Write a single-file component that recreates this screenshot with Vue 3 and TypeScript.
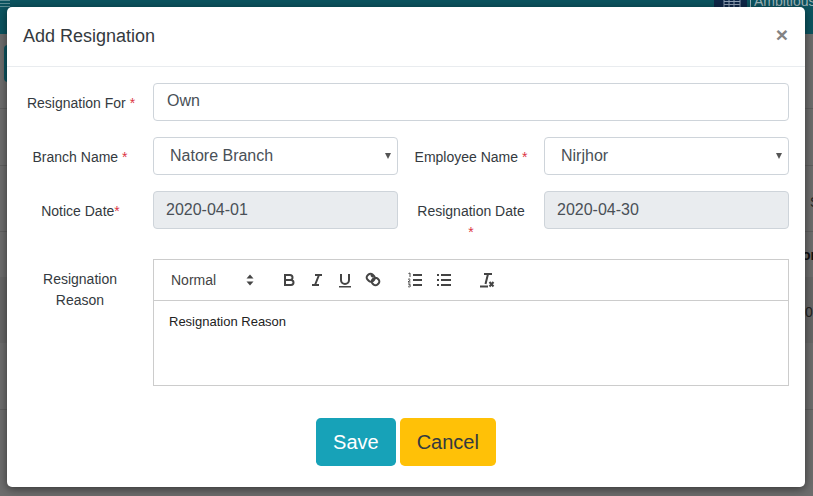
<script setup lang="ts">
import { ref } from 'vue'

const resignationFor = ref('Own')
const branch = ref('Natore Branch')
const employee = ref('Nirjhor')
</script>

<template>
  <div class="page">
    <!-- what shows behind the dialog -->
    <div class="backdrop">
      <div class="topbar">
        <span class="burger"></span>
        <span class="org">
          <svg class="org-icon" width="33" height="8" viewBox="0 0 33 8">
            <rect width="33" height="8" fill="#0f2748" />
            <path d="M10 1.500h16M10 4.500h16M10 7.500h16M10 0v8M15 0v8M20 0v8M26 0v8" stroke="#8fa0b4" stroke-width="1" fill="none" />
          </svg>
          <span class="org-bar"></span>
          Ambitious
        </span>
      </div>
      <span class="bg-tab"></span>
      <span class="bg-band"></span>
      <span class="bg-text bg-s">S</span>
      <span class="bg-text bg-or">or</span>
      <span class="bg-text bg-zero">0</span>
      <span class="bg-line line-d"></span>
      <span class="bg-line line-a"></span>
      <span class="bg-line line-b"></span>
      <span class="bg-line line-c"></span>
    </div>

    <div class="modal">
      <header class="modal-header">
        <h5>Add Resignation</h5>
        <button class="close" type="button">×</button>
      </header>

      <form class="modal-body" @submit.prevent>
        <div class="row row-for">
          <label class="field-label for-label">Resignation For <i>*</i></label>
          <input v-model="resignationFor" class="control own" type="text" />
        </div>

        <div class="row row-pair">
          <label class="field-label">Branch Name <i>*</i></label>
          <span class="select-wrap">
            <select v-model="branch" class="control">
              <option>Natore Branch</option>
            </select>
          </span>
          <label class="field-label">Employee Name <i>*</i></label>
          <span class="select-wrap">
            <select v-model="employee" class="control">
              <option>Nirjhor</option>
            </select>
          </span>
        </div>

        <div class="row row-pair row-dates">
          <label class="field-label notice-label">Notice Date<i>*</i></label>
          <input class="control" type="text" value="2020-04-01" readonly />
          <label class="field-label date-label">Resignation Date <i>*</i></label>
          <input class="control" type="text" value="2020-04-30" readonly />
        </div>

        <div class="row row-editor">
          <label class="field-label reason-label">Resignation<br />Reason</label>
          <div class="editor">
            <div class="toolbar">
              <span class="heading">
                Normal
                <svg width="8" height="12" viewBox="0 0 8 12"><path d="M4 0.500 7.500 4.500H0.500ZM4 11.500 0.500 7.500H7.500Z" fill="#444" /></svg>
              </span>
              <span class="tool-group format-group">
                <svg class="tool" viewBox="0 0 18 18">
                  <path d="M5 4h5a2.500 2.500 0 0 1 0 5H5ZM5 9h6a2.500 2.500 0 0 1 0 5H5Z" fill="none" stroke="#444" stroke-width="2" />
                </svg>
                <svg class="tool" viewBox="0 0 18 18">
                  <path d="M7 4h7M4 14h7M11 4 7 14" fill="none" stroke="#444" stroke-width="2" />
                </svg>
                <svg class="tool" viewBox="0 0 18 18">
                  <path d="M5 3v6a4 4 0 0 0 8 0V3" fill="none" stroke="#444" stroke-width="2" />
                  <rect x="3" y="15" width="12" height="1.500" fill="#444" />
                </svg>
                <svg class="tool" viewBox="0 0 18 18">
                  <path d="M7 4 9 6M3.500 4.500l1-1a2.800 2.800 0 0 1 4 0l1.500 1.500a2.800 2.800 0 0 1 0 4l-1 1a2.800 2.800 0 0 1-4 0L3.500 8.500a2.800 2.800 0 0 1 0-4ZM8.500 8.500l1-1a2.800 2.800 0 0 1 4 0l1 1a2.800 2.800 0 0 1 0 4l-1 1a2.800 2.800 0 0 1-4 0l-1-1a2.800 2.800 0 0 1 0-4Z" fill="none" stroke="#444" stroke-width="2" />
                </svg>
              </span>
              <span class="tool-group list-group">
                <svg class="tool" viewBox="0 0 18 18">
                  <path d="M7 4h9M7 9h9M7 14h9" stroke="#444" stroke-width="2" fill="none" />
                  <path d="M2.500 2.500 4 2v4M2 8.500c1-1 2.500-.5 2 .8L2 11h2.500M2 13h2.300l-1 1.200c1 0 1.500.500 1 1.300-.4.500-1.500.500-2.300 0" stroke="#444" stroke-width="1" fill="none" />
                </svg>
                <svg class="tool" viewBox="0 0 18 18">
                  <path d="M6 4h10M6 9h10M6 14h10" stroke="#444" stroke-width="2" fill="none" />
                  <path d="M2 4h2M2 9h2M2 14h2" stroke="#444" stroke-width="2" fill="none" />
                </svg>
              </span>
              <span class="tool-group">
                <svg class="tool" viewBox="0 0 18 18">
                  <path d="M6 3h8M10 3 7.500 13M2 15.500h8" stroke="#444" stroke-width="2" fill="none" />
                  <path d="M11.500 11l4 4.500M15.500 11l-4 4.500" stroke="#444" stroke-width="2" fill="none" />
                </svg>
              </span>
            </div>
            <div class="content">Resignation Reason</div>
          </div>
        </div>

        <div class="actions">
          <button class="btn save" type="submit">Save</button>
          <button class="btn cancel" type="button">Cancel</button>
        </div>
      </form>
    </div>
  </div>
</template>

<style scoped>
.page {
  position: relative;
  width: 813px;
  height: 496px;
  overflow: hidden;
  font-family: "Liberation Sans", Arial, sans-serif;
  color: #212529;
}

.backdrop {
  position: absolute;
  inset: 0;
  background: #6d6d6d;
}

.topbar {
  height: 34px;
  background: #0c5460;
  display: flex;
  justify-content: space-between;
  overflow: hidden;
}

.burger {
  width: 10px;
  height: 7px;
  background: repeating-linear-gradient(#5d8d94 0 1px, transparent 1px 3px);
}

.org {
  display: flex;
  align-items: flex-start;
  margin-top: -6px;
  font-size: 14px;
  line-height: 14px;
  color: #9fb3b8;
  white-space: nowrap;
  width: 99px;
}

.org-icon {
  margin-top: 6px;
  flex: none;
}

.org-bar {
  width: 1px;
  height: 14px;
  margin: 0 3px 0 3px;
  background: #9fb3b8;
  flex: none;
}

.bg-tab {
  position: absolute;
  left: 4px;
  top: 45px;
  width: 10px;
  height: 37px;
  background: #0c5460;
  border-radius: 4px;
}

.bg-band {
  position: absolute;
  left: 0;
  right: 0;
  top: 277px;
  height: 66px;
  background: #676767;
}

.bg-text {
  position: absolute;
  font-size: 14px;
  color: #222;
}

.bg-s { left: 810px; top: 194px; }
.bg-or { left: 802px; top: 247px; font-weight: 700; color: #111; }
.bg-zero { left: 805px; top: 304px; }

.bg-line {
  position: absolute;
  left: 0;
  right: 0;
  height: 1px;
  background: #5f5f5f;
}

.line-d { top: 108px; }
.line-a { top: 165px; }
.line-b { top: 231px; }
.line-c { top: 409px; }

.modal {
  position: absolute;
  left: 7px;
  top: 7px;
  width: 798px;
  height: 480px;
  background: #fff;
  border-radius: 5px;
  box-shadow: 0 2px 10px rgba(0, 0, 0, 0.5);
}

.modal-header {
  height: 60px;
  box-sizing: border-box;
  border-bottom: 1px solid #e9ecef;
  display: flex;
  align-items: center;
  justify-content: space-between;
  padding: 0 17px 0 16px;
}

.modal-header h5 {
  margin: 0;
  font-size: 18px;
  font-weight: 400;
  color: #343a40;
}

.close {
  border: none;
  background: none;
  padding: 0 0 5px;
  font-family: inherit;
  font-size: 21px;
  font-weight: 700;
  line-height: 1;
  color: #838383;
}

.modal-body {
  display: flex;
  flex-direction: column;
  padding: 16px 16px 0 0;
}

.row {
  display: grid;
  align-items: center;
}

.row-for {
  grid-template-columns: 146px 636px;
  height: 38px;
  margin-bottom: 16px;
}

.row-pair {
  grid-template-columns: 146px 245px 146px 245px;
  height: 38px;
  margin-bottom: 16px;
}

.row-dates {
  margin-bottom: 30px;
  align-items: start;
}

.row-editor {
  grid-template-columns: 146px 636px;
  align-items: start;
}

.field-label {
  font-size: 14px;
  line-height: 21px;
  color: #343a40;
  text-align: center;
  padding-top: 2px;
}

.for-label {
  padding-left: 2px;
}

.notice-label {
  padding-left: 1px;
}

.row-dates .field-label {
  padding-top: 10px;
}

.row-dates .date-label {
  padding-left: 18px;
  padding-right: 18px;
}

.reason-label {
  padding-top: 10px;
}

.field-label i {
  color: #dc3545;
  font-style: normal;
}

.control {
  box-sizing: border-box;
  width: 100%;
  height: 38px;
  border: 1px solid #ced4da;
  border-radius: 4px;
  padding: 0 12px;
  background: #fff;
  font-family: inherit;
  font-size: 16px;
  color: #495057;
  outline: none;
}

.own {
  padding-left: 13px;
  padding-bottom: 2px;
}

.select-wrap {
  position: relative;
  display: block;
}

.select-wrap::after {
  content: "";
  position: absolute;
  right: 7px;
  top: 16px;
  border-left: 3px solid transparent;
  border-right: 3px solid transparent;
  border-top: 6px solid #555;
  pointer-events: none;
}

select.control {
  appearance: none;
  padding-left: 16px;
  padding-bottom: 2px;
}

input[readonly] {
  background: #e9ecef;
}

.editor {
  box-sizing: border-box;
  height: 127px;
  border: 1px solid #ccc;
  display: flex;
  flex-direction: column;
}

.toolbar {
  box-sizing: border-box;
  height: 41px;
  border-bottom: 1px solid #ccc;
  display: flex;
  align-items: center;
  padding-left: 17px;
  color: #444;
}

.heading {
  width: 84px;
  display: flex;
  align-items: center;
  justify-content: space-between;
  box-sizing: border-box;
  padding-right: 1px;
  margin-right: 25px;
  font-size: 14px;
}

.tool-group {
  display: flex;
  gap: 10px;
}

.format-group {
  margin-right: 24px;
}

.list-group {
  gap: 11px;
  margin-right: 25px;
}

.tool {
  width: 18px;
  height: 18px;
}

.content {
  padding: 12px 15px;
  font-size: 13px;
  line-height: 18px;
  color: #222;
}

.actions {
  display: flex;
  justify-content: center;
  gap: 4px;
  margin-top: 32px;
  padding-left: 16px;
}

.btn {
  height: 48px;
  border: none;
  border-radius: 4.8px;
  padding: 0 17px;
  font-family: inherit;
  font-size: 20px;
}

.save {
  background: #17a2b8;
  color: #fff;
}

.cancel {
  background: #ffc107;
  color: #343a40;
}
</style>
